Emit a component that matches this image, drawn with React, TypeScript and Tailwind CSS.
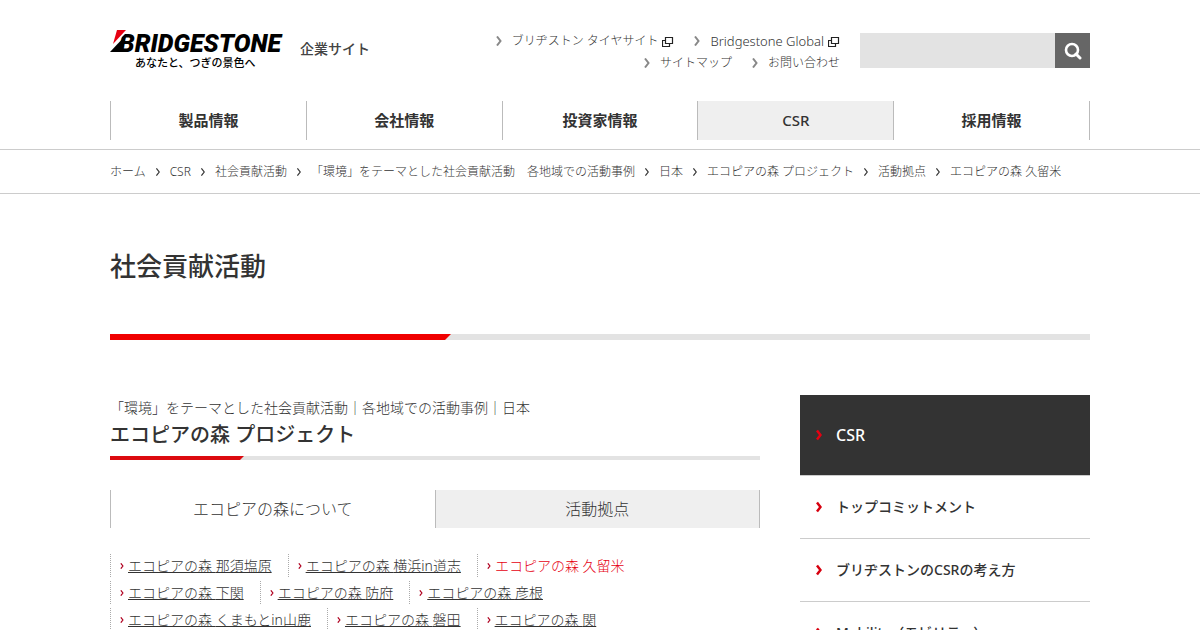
import type { ReactNode } from 'react';

const mainLinks = ['製品情報', '会社情報', '投資家情報', 'CSR', '採用情報'];

const crumbs = [
    'ホーム',
    'CSR',
    '社会貢献活動',
    '「環境」をテーマとした社会貢献活動　各地域での活動事例',
    '日本',
    'エコピアの森 プロジェクト',
    '活動拠点',
    'エコピアの森 久留米',
];

const forestRows = [
    ['那須塩原', '横浜in道志', '久留米'],
    ['下関', '防府', '彦根'],
    ['くまもとin山鹿', '磐田', '関'],
];

const sideLinks = ['トップコミットメント', 'ブリヂストンのCSRの考え方', 'Mobility（モビリティ）'];

const Chevron = ({ className }: { className: string }) => (
    <svg viewBox="0 0 6 10" className={className} fill="none" stroke="currentColor" aria-hidden="true">
        <path d="M1 0.5 L4.5 5 L1 9.5" />
    </svg>
);

const WindowIcon = () => (
    <svg viewBox="0 0 12 11" className="w-3 h-[11px]" fill="none" stroke="#222" strokeWidth="1.2" aria-hidden="true">
        <path d="M3.5 1.5 H10.5 V7.5 H3.5 Z M3.5 4.5 H0.5 V10.5 H7.5 V7.5" />
    </svg>
);

const Logo = () => (
    <a href="#" className="block">
        <svg viewBox="0 0 174 40" className="w-[174px] h-10" role="img" aria-label="BRIDGESTONE">
            <text x="9" y="22" className="font-[Roboto] text-[25px] font-black italic">
                BRIDGESTONE
            </text>
            <path d="M6 0 H19 L2 17 Z" fill="#fff" />
            <path d="M7 0 H16 L3 14 Z" fill="#e60012" />
            <path d="M0 22 L16 5 L12 22 Z" fill="#000" />
            <text x="25" y="37" className="font-['Noto_Sans_CJK_JP'] text-[11px] font-medium">
                あなたと、つぎの景色へ
            </text>
        </svg>
    </a>
);

const UtilityLink = ({ children }: { children: ReactNode }) => (
    <a href="#" className="flex items-center">
        <Chevron className="w-[6px] h-[10px] mr-[10px] text-[#888] stroke-2" />
        {children}
    </a>
);

const Header = () => (
    <header className="border-b border-[#ccc] pb-[9px]">
        <div className="max-w-[980px] mx-auto">
            <div className="flex pt-[30px] h-[101px]">
                <Logo />
                <p className="ml-4 mt-2 text-sm leading-[22px] font-medium text-[#444]">企業サイト</p>
                <div className="ml-auto mr-5 text-xs leading-[22px]">
                    <div className="flex justify-end gap-5">
                        <UtilityLink>
                            <span className="mr-1">ブリヂストン タイヤサイト</span>
                            <WindowIcon />
                        </UtilityLink>
                        <UtilityLink>
                            <span className="mr-1 text-[13px]">Bridgestone Global</span>
                            <WindowIcon />
                        </UtilityLink>
                    </div>
                    <div className="flex justify-end gap-5">
                        <UtilityLink>サイトマップ</UtilityLink>
                        <UtilityLink>お問い合わせ</UtilityLink>
                    </div>
                </div>
                <form className="flex h-[35px] mt-[3px]">
                    <input type="search" aria-label="サイト内検索" className="w-[195px] bg-[#e3e3e3] px-2" />
                    <button type="button" aria-label="検索" className="w-[35px] bg-[#666] flex items-center justify-center">
                        <svg viewBox="0 0 18 18" className="w-[18px] h-[18px]" fill="none" stroke="#fff" aria-hidden="true">
                            <circle cx="8" cy="8" r="6" strokeWidth="2.6" />
                            <path d="M12 12 L16 16" strokeWidth="3" strokeLinecap="round" />
                        </svg>
                    </button>
                </form>
            </div>
            <nav className="flex border-r border-[#bbb]">
                {mainLinks.map((text) => (
                    <a
                        key={text}
                        href="#"
                        className={`flex-1 border-l border-[#bbb] text-center text-[15px] leading-[39px] text-[#333] ${
                            text === 'CSR' ? 'bg-[#efefef] font-medium' : 'font-bold'
                        }`}
                    >
                        {text}
                    </a>
                ))}
            </nav>
        </div>
    </header>
);

const Breadcrumbs = () => (
    <nav className="border-b border-[#ccc]">
        <ol className="max-w-[980px] mx-auto flex text-xs leading-[43px] whitespace-nowrap">
            {crumbs.map((text, i) => (
                <li key={text} className="flex items-center">
                    {i > 0 && <Chevron className="w-[6px] h-2 ml-[9px] mr-[9px] text-[#333] stroke-[1.5]" />}
                    <a href="#">{text}</a>
                </li>
            ))}
        </ol>
    </nav>
);

const ForestLinks = () => (
    <div className="mt-[26px] text-sm leading-[23px]">
        {forestRows.map((row) => (
            <ul key={row[0]} className="flex mb-1">
                {row.map((name) => (
                    <li key={name} className="flex items-center border-l border-dotted border-[#aaa] pl-[9px] pr-4">
                        <Chevron className="w-1 h-[6px] mr-1 text-[#b00020] stroke-2" />
                        {name === '久留米' ? (
                            <span className="text-[#e60012]">エコピアの森 {name}</span>
                        ) : (
                            <a href="#" className="underline">
                                エコピアの森 {name}
                            </a>
                        )}
                    </li>
                ))}
            </ul>
        ))}
    </div>
);

const Sidebar = () => (
    <aside className="w-[290px] shrink-0 font-medium text-[#333]">
        <a href="#" className="flex items-center h-20 pl-4 bg-[#333] text-white">
            <Chevron className="w-[6px] h-3 mr-[14px] text-[#e60012] stroke-[2.5]" />
            CSR
        </a>
        <ul className="text-sm">
            {sideLinks.map((text) => (
                <li key={text} className="border-t border-[#ccc]">
                    <a href="#" className="flex items-center pl-4 leading-[62px]">
                        <Chevron className="w-[6px] h-3 mr-[14px] text-[#d7000f] stroke-[2.5]" />
                        {text}
                    </a>
                </li>
            ))}
        </ul>
    </aside>
);

const App = () => (
    <div lang="ja" className="bg-white text-[#333] font-light font-['Noto_Sans','Noto_Sans_CJK_JP',sans-serif]">
        <Header />
        <Breadcrumbs />
        <main className="max-w-[980px] mx-auto">
            <h1 className="pt-[52px] text-[26px] leading-10 font-medium text-[#333]">社会貢献活動</h1>
            <div className="mt-12 h-[6px] bg-[#e3e3e3]">
                <div className="h-full w-[341px] bg-[#f00000] [clip-path:polygon(0_0,100%_0,calc(100%-6px)_100%,0_100%)]" />
            </div>
            <div className="mt-[55px] flex gap-10">
                <div className="flex-1">
                    <p className="text-sm leading-[26px]">
                        「環境」をテーマとした社会貢献活動｜各地域での活動事例｜日本
                    </p>
                    <h2 className="text-xl leading-7 font-medium text-[#333]">エコピアの森 プロジェクト</h2>
                    <div className="mt-[7px] h-1 bg-[#e3e3e3]">
                        <div className="h-full w-[134px] bg-[#dc0a10] [clip-path:polygon(0_0,100%_0,calc(100%-4px)_100%,0_100%)]" />
                    </div>
                    <div className="mt-[30px] flex border-r border-[#bbb] text-center leading-[38px]">
                        <a href="#" className="flex-1 border-l border-[#bbb]">
                            エコピアの森について
                        </a>
                        <a href="#" className="flex-1 border-l border-[#bbb] bg-[#efefef]">
                            活動拠点
                        </a>
                    </div>
                    <ForestLinks />
                </div>
                <Sidebar />
            </div>
        </main>
    </div>
);

export default App;
